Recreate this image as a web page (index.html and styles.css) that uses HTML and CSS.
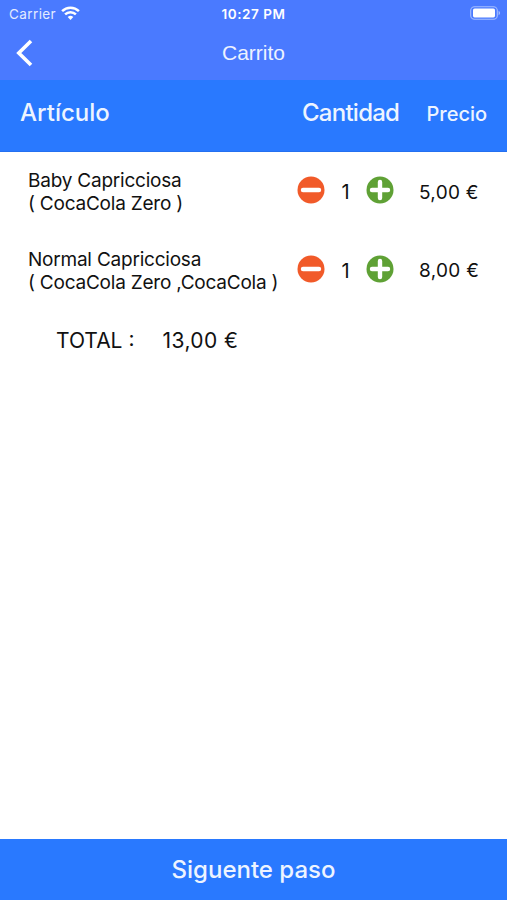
FILE: index.html
```html
<!DOCTYPE html>
<html lang="es">
<head>
    <meta charset="UTF-8">
    <meta name="viewport" content="width=device-width, initial-scale=1">
    <title>Carrito</title>
    <link rel="stylesheet" href="styles.css">
</head>

<body>
    <!-- Cabecera -->
    <header class="header">
        <div class="status-bar">
            <div class="carrier">
                <span class="carrier-name">Carrier</span>
                <svg class="wifi" width="19" height="14" viewBox="0 0 19 14" fill="none" stroke="#fff" stroke-width="2.5">
                    <path d="M1.1 5.2a12 12 0 0 1 16.8 0"/>
                    <path d="M4.1 8.4a7.7 7.7 0 0 1 10.8 0"/>
                    <path d="M9.5 14L6.7 11.1a4 4 0 0 1 5.6 0z" fill="#fff" stroke="none"/>
                </svg>
            </div>
            <span class="time">10:27 PM</span>
            <svg class="battery" width="31" height="14" viewBox="0 0 31 14">
                <rect x="0.7" y="0.7" width="26.6" height="12.6" rx="3.8" fill="none" stroke="#a5beff" stroke-width="1.1"/>
                <rect x="3" y="2.6" width="22" height="8.8" rx="1.6" fill="#fff"/>
                <path d="M28.6 4.8v4.4c2-0.8 2-3.6 0-4.4z" fill="#a5beff"/>
            </svg>
        </div>
        <div class="nav-bar">
            <a class="back" href="#" aria-label="Volver">
                <svg width="18" height="28" viewBox="0 0 18 28" fill="none" stroke="#fff" stroke-width="3.6">
                    <path d="M16 2L3.8 14L16 26"/>
                </svg>
            </a>
            <h1 class="title">Carrito</h1>
        </div>
    </header>

    <!-- Títulos de la tabla -->
    <div class="row table-head">
        <span class="head-item">Artículo</span>
        <span class="head-qty">Cantidad</span>
        <span class="head-price">Precio</span>
    </div>

    <!-- Artículos -->
    <main class="cart">
        <div class="row item">
            <div class="name">Baby Capricciosa<br>( CocaCola Zero )</div>
            <div class="qty">
                <svg class="icon" viewBox="0 0 28 28">
                    <circle cx="14" cy="14" r="13.5" fill="#f15a29"/>
                    <path d="M6 14h16" stroke="#fff" stroke-width="4.4" stroke-linecap="round"/>
                </svg>
                <span class="count">1</span>
                <svg class="icon" viewBox="0 0 28 28">
                    <circle cx="14" cy="14" r="13.5" fill="#5fa135"/>
                    <path d="M6 14h16M14 6v16" stroke="#fff" stroke-width="4.4" stroke-linecap="round"/>
                </svg>
            </div>
            <span class="price">5,00 €</span>
        </div>
        <div class="row item">
            <div class="name">Normal Capricciosa<br>( CocaCola Zero ,CocaCola )</div>
            <div class="qty">
                <svg class="icon" viewBox="0 0 28 28">
                    <circle cx="14" cy="14" r="13.5" fill="#f15a29"/>
                    <path d="M6 14h16" stroke="#fff" stroke-width="4.4" stroke-linecap="round"/>
                </svg>
                <span class="count">1</span>
                <svg class="icon" viewBox="0 0 28 28">
                    <circle cx="14" cy="14" r="13.5" fill="#5fa135"/>
                    <path d="M6 14h16M14 6v16" stroke="#fff" stroke-width="4.4" stroke-linecap="round"/>
                </svg>
            </div>
            <span class="price">8,00 €</span>
        </div>
        <div class="total">
            <span class="total-label">TOTAL :</span>
            <span class="total-price">13,00 €</span>
        </div>
    </main>

    <!-- Botón inferior -->
    <button class="next">Siguente paso</button>
</body>
</html>
```
FILE: styles.css
```css
* {
    box-sizing: border-box;
}

body {
    margin: 0;
    height: 100vh;
    display: flex;
    flex-direction: column;
    background: #fff;
    color: #111;
    font-family: Inter, "Liberation Sans", sans-serif;
    overflow: hidden;
}

/* Cabecera */
.header {
    height: 80px;
    flex: none;
    background: #4a7aff;
    color: #fff;
}

.status-bar {
    height: 27px;
    padding: 0 6px 0 9px;
    display: grid;
    grid-template-columns: 1fr auto 1fr;
    align-items: center;
    font-size: 13px;
}

.carrier {
    display: flex;
    align-items: center;
    gap: 5px;
    color: #e3ebff;
}

.carrier-name {
    font-size: 13.5px;
    letter-spacing: 0.4px;
}

.wifi {
    margin-bottom: 1px;
}

.time {
    font-weight: 600;
    font-size: 13.5px;
    letter-spacing: 0.55px;
    padding-right: 3px;
}

.battery {
    justify-self: end;
    margin-bottom: 1px;
}

.nav-bar {
    height: 51px;
    padding: 0 15px;
    display: grid;
    grid-template-columns: 1fr auto 1fr;
    align-items: center;
}

.back {
    display: flex;
}

.title {
    margin: 0;
    font-family: "Liberation Sans", Arial, sans-serif;
    font-size: 21px;
    font-weight: normal;
    color: #edf2ff;
}

/* Columnas comunes */
.row {
    display: grid;
    grid-template-columns: 270px 96px 1fr;
    align-items: center;
}

.table-head {
    height: 72px;
    flex: none;
    padding: 0 0 6px 20px;
    grid-template-columns: 282px 124.5px 1fr;
    background: #2979ff;
    border-bottom: 1px solid #2470f0;
    color: #edf4ff;
    font-size: 24px;
    font-weight: 450;
}

.head-qty {
    letter-spacing: -0.75px;
}

.head-price {
    font-size: 20px;
    padding-top: 2px;
}

/* Lista de artículos */
.cart {
    flex: 1;
    padding-top: 17px;
}

.item {
    height: 46px;
    margin-bottom: 32.5px;
    padding-left: 28px;
}

.name {
    font-size: 19px;
    line-height: 23px;
    letter-spacing: -0.22px;
    white-space: nowrap;
}

.qty {
    display: flex;
    align-items: center;
    justify-content: space-between;
    padding-bottom: 4px;
    margin-left: -1px;
}

.icon {
    width: 28px;
    height: 28px;
}

.count {
    font-size: 20px;
    padding-top: 4px;
}

.price {
    font-size: 19px;
    letter-spacing: 0.3px;
    padding-left: 25px;
}

.total {
    display: flex;
    gap: 28px;
    padding-left: 56px;
    margin-top: 2px;
    font-size: 21px;
    line-height: 30px;
}

.total-price {
    letter-spacing: 0.45px;
}

/* Botón inferior */
.next {
    height: 61px;
    flex: none;
    border: 0;
    background: #2979ff;
    color: #edf4ff;
    font-family: inherit;
    font-size: 24px;
    font-weight: 450;
}
```
